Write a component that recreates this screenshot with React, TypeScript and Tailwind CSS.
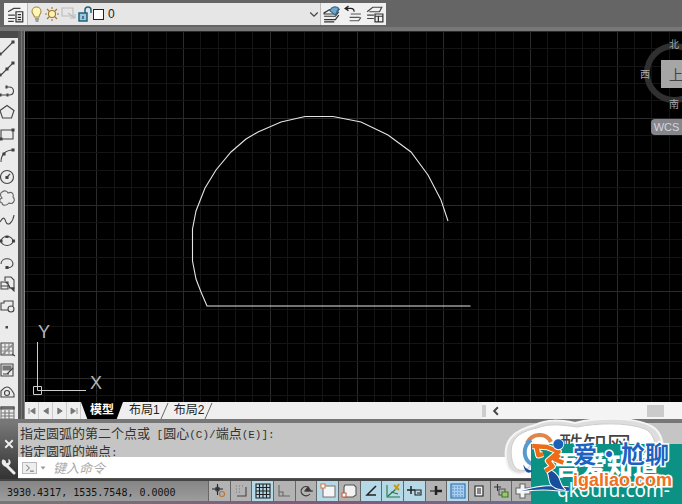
import type { ReactNode } from 'react';

function Icon({ children, className = 'h-4 w-4' }: { children: ReactNode; className?: string }) {
  return (
    <svg viewBox="0 0 16 16" className={`${className} shrink-0`} fill="none" stroke="#444" strokeWidth="1.1" aria-hidden="true">
      {children}
    </svg>
  );
}

const drawTools = [
  { label: '直线', icon: <><path d="M1 14L13 2" /><path d="M12 1h2v2h-2zM0 13h1v2H0z" fill="#333" /></> },
  { label: '构造线', icon: <><path d="M1 14L13 2" /><path d="M12 1h2v2h-2zM6 7h2v2H6zM0 13h1v2H0z" fill="#333" /></> },
  { label: '多段线', icon: <><path d="M0 12h9c6 0 6-8 0-8H6" /><path d="M6 3h1v2H6zM7 11h1v2H7zM0 11h1v2H0z" fill="#333" /></> },
  { label: '多边形', icon: <path d="M7 1.500l7 5-2.500 7.500h-9L0 6.500z" /> },
  { label: '矩形', icon: <><path d="M1 4h12v9H1z" /><path d="M12 3h2v2h-2zM0 12h2v2H0z" fill="#333" /></> },
  { label: '圆弧', icon: <><path d="M1 15C1 8 5 3 13 3" /><path d="M12 2h2v2h-2zM3 6h2v2H3z" fill="#333" /></> },
  { label: '圆', icon: <><circle cx="7" cy="8" r="6.500" /><path d="M6 9l4-4" /><path d="M6 7.500h2v2H6z" fill="#333" /></> },
  { label: '修订云线', icon: <path d="M2 2c3-2 5-1 6 1 4-2 6 1 5 4 3 3 0 8-4 6-2 3-7 3-7 0-3-1-3-4 0-5-2-2-2-5 0-6z" stroke="#666" /> },
  { label: '样条曲线', icon: <path d="M0 10c4-7 5-3 6 0 2 5 7 0 8-7" /> },
  { label: '椭圆', icon: <><ellipse cx="7" cy="8" rx="6" ry="4.500" /><path d="M0 7h2v2H0zM12.500 7h2v2h-2zM6 3h2v1.500H6z" fill="#333" /></> },
  { label: '椭圆弧', icon: <><path d="M1 9c0-7 12-7 12 0 0 3-4 4-6 4" /><path d="M6 11.500h2v2H6z" fill="#333" /></> },
  { label: '插入块', icon: <><path d="M5 5V1h6l3 3v8H9M1 6h7v7H1zM1 10h7M4 6c2 0 5 2 6 6" /><path d="M11 12h3v3z" fill="#222" /></> },
  { label: '创建块', icon: <><path d="M8 12H1V5h3V3h9v5" /><circle cx="11" cy="11" r="3" /></> },
  { label: '点', icon: <path d="M5.500 7h2.500v2.500H5.500z" fill="#444" stroke="none" /> },
  { label: '图案填充', icon: <><path d="M1 2h12v12H1z" /><path d="M1 6h12M1 10h12M5 2v12M9 2v12M2 14L13 3" stroke="#888" /><path d="M12 13l3 2" /></> },
  { label: '渐变色', icon: <><path d="M1 2h12v12H1z" /><path d="M3 4h8v4H3z" fill="#777" stroke="#777" /><path d="M3 12h6M7 12l6-6" /></> },
  { label: '面域', icon: <><path d="M1 13h13v-3c-2-3-3-7-7-7-3 0-4 2-6 4z" /><circle cx="7" cy="9" r="2.500" /></> },
  { label: '表格', icon: <><path d="M1 2h13v12H1zM1 8h13M1 11h13M5 5v9M9 5v9" stroke="#777" /><path d="M1 2h13v2H1z" fill="#999" /></> },
];

const statusTools = [
  { label: '推断约束', on: false, icon: <><path d="M1 6h11M6.500 1v11" stroke="#222" /><circle cx="6.500" cy="6" r="2" fill="#333" /><circle cx="11" cy="11" r="2.500" stroke="#b87333" /></> },
  { label: '捕捉模式', on: false, icon: <><path d="M13 4v9H4" /><path d="M3 3h8M3 6h6M3 9h6" stroke="#777" strokeDasharray="1 2" /></> },
  { label: '栅格显示', on: true, icon: <path d="M1 1h14v14H1zM4.500 1v14M8 1v14M11.500 1v14M1 4.500h14M1 8h14M1 11.500h14" stroke="#222" /> },
  { label: '正交模式', on: false, icon: <path d="M3 2v11h11M3 9h4v4" stroke="#666" /> },
  { label: '极轴追踪', on: false, icon: <><path d="M12 11A5 4.500 0 1 1 10 4M7 8h8M7 8l4-4" stroke="#333" /><path d="M7 8h6l-3-4z" fill="#333" /></> },
  { label: '对象捕捉', on: true, icon: <><path d="M3 3h12v11H3z" fill="#f6f6f6" stroke="#777" /><path d="M1 1h4v4H1z" fill="#fff" stroke="#d77a42" /></> },
  { label: '三维对象捕捉', on: false, icon: <><path d="M4 2h9l2 2v8l-3 2H3V4z" fill="#f2f2f2" stroke="#555" /><path d="M1 10h4v4H1z" fill="#fff" stroke="#c65d3a" /></> },
  { label: '对象捕捉追踪', on: true, icon: <path d="M13 3L4 12h9" stroke="#222" strokeWidth="1.5" /> },
  { label: '动态 UCS', on: true, icon: <><path d="M2 2v12h13M3 13l8-7M6 9l7 2" stroke="#27753f" /><path d="M9 2l5 5M14 1l-4 6" stroke="#c29b22" strokeWidth="2" /></> },
  { label: '动态输入', on: true, icon: <><path d="M1 7h8M5 3v8" stroke="#222" strokeWidth="1.5" /><path d="M9 7h6v5H9zM11 10h3" stroke="#222" /></> },
  { label: '线宽', on: false, icon: <><path d="M2 8h6" stroke="#222" /><path d="M8 3v9M8 8h6" stroke="#222" strokeWidth="2.500" /></> },
  { label: '透明度', on: true, icon: <><path d="M1 1h14v14H1z" fill="#a8ceef" stroke="#2b65a8" /><path d="M2 4h12M2 7h12M2 10h12M2 13h12" stroke="#4d88c7" strokeDasharray="2 1" /></> },
  { label: '快捷特性', on: false, icon: <><path d="M4 3h8v10H4z" fill="#eee" stroke="#222" /><path d="M6 6h4M6 8h4M6 10h4" stroke="#222" /></> },
  { label: '选择循环', on: false, icon: <><path d="M1 4h7M4.500 1v7" stroke="#333" /><path d="M6 6h6v6H6z" stroke="#555" /><path d="M9 9h6v5H9z" fill="#9dc66b" stroke="#3c7a28" /></> },
  { label: '注释监视器', on: false, icon: <path d="M5 1h5v4h5v6h-5v4H5v-4H1V5h4z" fill="#f4f4f4" stroke="#666" /> },
];

function LayerBar() {
  return (
    <header className="flex h-[31px] shrink-0 items-start border-b-4 border-[#777] bg-[#656565] pt-[3px] pl-1">
      <div className="flex h-[22px] w-[382px] items-center bg-[#e6e6e6] text-[#222]">
        <button aria-label="图层特性管理器" className="flex h-full w-6 items-center justify-center border-r border-[#bbb] bg-[#f3f3f3]">
          <Icon className="h-[18px] w-[18px]">
            <path d="M1 6l5-3h6M1 9h6M1 12h6M1 14.500h5" />
            <path d="M8 6h6v9H8zM9.500 8.500h3M9.500 11h3M9.500 13h3" stroke="#333" />
          </Icon>
        </button>
        <div className="flex h-full flex-1 items-center pl-px">
          <Icon>
            <path d="M5.500 11c0-2-2.500-3-2.500-5.500a4.500 4.500 0 0 1 9 0C12 8 10 9 10 11z" fill="#fff6b8" stroke="#a58b3f" />
            <path d="M6 13h4M6.500 15h3" stroke="#555" />
          </Icon>
          <Icon>
            <circle cx="7" cy="8" r="3.500" fill="#fff3b0" stroke="#9a7534" />
            <path d="M7 1v2M7 13v2M0 8h2M12 8h2M2 3l2 2M12 3l-2 2M2 13l2-2M12 13l-2-2" stroke="#9a7534" />
          </Icon>
          <Icon>
            <path d="M1 2h11v8H1z" stroke="#bbb" />
            <path d="M7 7l7 5M9 12h5V8" stroke="#bbb" />
          </Icon>
          <Icon>
            <path d="M2 7h8v8H2z" fill="#9ac6dc" stroke="#1f627f" strokeWidth="1.500" />
            <path d="M8 7V4c0-4 6-4 6 0v3" stroke="#1f627f" strokeWidth="1.500" />
            <path d="M6 10v3" stroke="#134" />
          </Icon>
          <span className="h-[11px] w-[11px] border border-[#222] bg-white" />
          <select aria-label="图层" className="h-full flex-1 appearance-none bg-transparent pl-1 font-['Liberation_Sans',sans-serif] text-xs outline-none">
            <option>0</option>
          </select>
          <Icon className="h-3 w-3">
            <path d="M3 6l5 5 5-5" strokeWidth="1.600" />
          </Icon>
        </div>
        <div className="flex h-full w-[66px] items-center justify-around border-l border-[#bbb] bg-[#f0f0f0]">
          <button aria-label="将对象的图层置为当前">
            <Icon className="h-[18px] w-[18px]">
              <path d="M1 7l5-3h8l-3 4H1zM1 10h10l3-4M1 13h10l3-4M1 15h9" stroke="#333" />
              <path d="M6 5c2-4 6-4 8-2l-3 6z" fill="#75a5c7" stroke="#356a91" />
            </Icon>
          </button>
          <button aria-label="上一个图层">
            <Icon className="h-[18px] w-[18px]">
              <path d="M1 3h5c2 0 3 1 3 3M4 1L1 3l3 2" stroke="#222" />
              <path d="M6 8h9M5 11h9M5 14h8l2-3" stroke="#555" />
            </Icon>
          </button>
          <button aria-label="图层状态管理器">
            <Icon className="h-[18px] w-[18px]">
              <path d="M1 6l5-4h8l-2 4M1 9h6M1 12h6M3 6h9" />
              <path d="M8 8h7v7H8zM8 10h7M11 10v5" stroke="#333" />
            </Icon>
          </button>
        </div>
      </div>
    </header>
  );
}

function DrawToolbar() {
  return (
    <div role="toolbar" aria-label="绘图" className="flex w-[25px] shrink-0 border-r border-[#888] bg-[#555]">
      <div className="flex w-[18px] flex-col bg-[#ebebeb]">
        <div className="h-[7px] shrink-0 bg-[#4b4b4b]" />
        <div className="flex min-h-0 flex-1 flex-col justify-between overflow-hidden pt-0.5">
          {drawTools.map((tool, i) => (
            <button key={tool.label} aria-label={tool.label} className={i === drawTools.length - 1 ? 'h-[14px]' : 'h-4'}>
              <Icon>{tool.icon}</Icon>
            </button>
          ))}
        </div>
      </div>
      <div className="ml-[3px] w-px bg-[#777]" />
    </div>
  );
}

// grid starts left of the viewport, every fifth line is a major one
const columns = Array.from({ length: 40 }, (_, i) => ({ at: Math.round(9.5 + i * 17.35), major: i % 5 === 0 }));
const rows = Array.from({ length: 22 }, (_, i) => ({ at: Math.round(31 + i * 17.35), major: i % 5 === 0 }));

function Drawing() {
  return (
    <main className="relative min-h-0 flex-1 overflow-hidden bg-black">
      <svg viewBox="25 31 657 371" preserveAspectRatio="xMinYMin slice" className="h-full w-full" fill="none">
        <g strokeWidth="1">
          {columns.map((c) => (
            <path key={c.at} d={`M${c.at + 0.5} 31V402`} stroke={c.major ? '#2b2b2b' : '#141414'} />
          ))}
          {rows.map((r) => (
            <path key={r.at} d={`M25 ${r.at + 0.5}H682`} stroke={r.major ? '#2b2b2b' : '#141414'} />
          ))}
        </g>
        <path
          d="M470.500 306H207L201 292L196 279L192.500 261V229L196 211L205 188L216 170L231 152L246 139L258 132L281 122L305 116.500H333L361 122L388 135L411 152L428 175L441 200L444 209L448 221"
          stroke="#e4e4e4"
          strokeWidth="1.100"
        />
        <path d="M37.500 342V386M41 390.500H86M33.500 386.500h8v8h-8zM37.500 387v3.500h4" stroke="#ccc" />
        <g fill="#b5b5b5" fontFamily="Liberation Sans, sans-serif" fontSize="18">
          <text x="38" y="338">Y</text>
          <text x="90" y="389">X</text>
        </g>
      </svg>

      {/* View cube */}
      <div className="absolute top-2 -right-5 h-[68px] w-[58px] font-['Noto_Sans_CJK_SC',sans-serif] text-[10px] leading-none text-[#aaa]">
        <svg viewBox="0 0 58 68" className="h-full w-full" fill="none">
          <circle cx="30" cy="34" r="27" stroke="#303030" strokeWidth="6" />
        </svg>
        <span className="absolute top-0 left-[25px]">北</span>
        <span className="absolute top-[30px] -left-1">西</span>
        <span className="absolute top-[60px] left-[25px]">南</span>
        <button className="absolute top-[21px] left-[17px] h-7 w-[30px] bg-[#a6a6a6] text-sm text-[#444]">上</button>
      </div>
      <button className="absolute top-[88px] -right-1 h-4 w-[35px] rounded-sm bg-[#85858c] pr-1 font-['Liberation_Sans',sans-serif] text-[11px] leading-4 text-[#d5d5dd]">
        WCS
      </button>
    </main>
  );
}

function Slash() {
  return (
    <svg viewBox="0 0 10 17" className="h-[17px] w-[10px] shrink-0" aria-hidden="true">
      <path d="M1 17L8 1" stroke="#666" fill="none" />
    </svg>
  );
}

function LayoutTabs() {
  return (
    <div className="flex h-[17px] shrink-0 items-stretch overflow-hidden bg-[#efefef] font-['Liberation_Sans','Noto_Sans_CJK_SC',sans-serif] text-xs leading-[17px] text-[#222]">
      {['M4 4v8M12 4L6 8l6 4z', 'M11 4L5 8l6 4z', 'M5 4l6 4-6 4z', 'M4 4l6 4-6 4zM12 4v8'].map((d, i) => (
        <button key={d} aria-label={['第一个', '上一个', '下一个', '最后一个'][i]} className="flex w-[14px] items-center justify-center border-r border-[#ccc]">
          <Icon className="h-3 w-3"><path d={d} fill="#777" stroke="#777" /></Icon>
        </button>
      ))}
      <button className="w-[42px] bg-black font-bold text-white [clip-path:polygon(0_0,100%_0,85%_100%,15%_100%)]">模型</button>
      <button className="ml-1.5">布局1</button>
      <Slash />
      <button className="ml-1">布局2</button>
      <Slash />
      <div className="flex-1" />
      <div className="flex w-[200px] items-center bg-[#f4f4f4]">
        <span className="h-3 w-1 bg-[#ccc]" />
        <button aria-label="向左滚动" className="ml-1 flex h-full w-3 items-center justify-center">
          <Icon className="h-[10px] w-[10px]"><path d="M11 2L5 8l6 6" strokeWidth="3" /></Icon>
        </button>
        <div className="flex-1" />
        <span className="mr-[18px] h-3 w-[17px] bg-[#cbcbcb]" />
      </div>
    </div>
  );
}

function CommandLine() {
  const mono = "font-['Liberation_Mono',monospace] text-[11px]";
  return (
    <section className="flex h-[60px] shrink-0 border-t-4 border-[#777] bg-[#c5c5c5]">
      <div className="flex w-[18px] shrink-0 flex-col items-center justify-between bg-linear-to-b from-[#777] to-[#333] pt-[15px] pb-1">
        <button aria-label="关闭">
          <Icon className="h-3 w-3"><path d="M3 3l10 10M13 3L3 13" stroke="#eee" strokeWidth="2.400" /></Icon>
        </button>
        <button aria-label="自定义">
          <Icon><path d="M6 7l7 7" stroke="#eee" strokeWidth="3" strokeLinecap="round" /><path d="M2 1C0 4 3 8 6 7s4-4 2-6v3L5 5 4 2z" fill="#eee" stroke="#eee" /></Icon>
        </button>
      </div>
      <div className="flex min-w-0 flex-1 flex-col font-['Noto_Sans_CJK_SC',sans-serif] text-[13px] text-[#333]">
        <div className="h-[34px] pt-[2px] pl-0.5 leading-[15px] whitespace-nowrap">
          <p>指定圆弧的第二个点或<span className={mono}> [</span>圆心<span className={mono}>(C)/</span>端点<span className={mono}>(E)]:</span></p>
          <p>指定圆弧的端点<span className={mono}>:</span></p>
        </div>
        <label className="flex flex-1 items-center border-b border-[#555] bg-white pl-1">
          <span className="flex h-3 w-[15px] items-center justify-center border border-[#bbb] bg-[#eee]">
            <Icon className="h-[10px] w-[10px]"><path d="M2 3l5 5-5 5M8 13h6" stroke="#666" strokeWidth="1.600" /></Icon>
          </span>
          <Icon className="ml-0.5 h-2 w-2"><path d="M3 5h10l-5 6z" fill="#999" stroke="none" /></Icon>
          <input aria-label="命令" placeholder="键入命令" className="ml-1.5 min-w-0 flex-1 bg-transparent text-[13px] italic outline-none placeholder:text-[#aaa]" />
        </label>
      </div>
    </section>
  );
}

function StatusBar() {
  return (
    <footer className="flex h-[25px] shrink-0 flex-col border-t-2 border-[#444] bg-linear-to-b from-[#858585] to-[#a0a0a0]">
      <div className="flex h-5 items-stretch">
        <output className="w-[208px] shrink-0 pl-[7px] font-['DejaVu_Sans_Mono',monospace] text-[10px] leading-6 whitespace-pre text-[#111]">3930.4317, 1535.7548, 0.0000</output>
        <div className="grid w-[325px] shrink-0 grid-cols-15">
          {statusTools.map((tool) => (
            <button
              key={tool.label}
              aria-label={tool.label}
              aria-pressed={tool.on}
              className={`flex items-center justify-center border-l border-[#666] ${tool.on ? 'bg-[#b5d9e6]' : 'bg-[#b3b3b3]'}`}
            >
              <Icon>{tool.icon}</Icon>
            </button>
          ))}
        </div>
      </div>
      <div className="flex-1 bg-linear-to-r from-[#777] via-[#80597a] to-[#557fa0]" />
    </footer>
  );
}

function Watermark() {
  const outline = '[paint-order:stroke] [-webkit-text-stroke:3px_white]';
  return (
    <div className="pointer-events-none absolute right-0 bottom-0 h-[92px] w-[178px] overflow-hidden">
      <svg viewBox="504 412 178 92" className="h-full w-full" fill="none" aria-hidden="true">
        <path d="M507 464c-6-24 8-34 28-39 12-6 25-5 40-2 20-5 58-7 76 3 12 6 15 24 10 40H531c-3 12-22 10-24-2z" fill="#ddd" stroke="#f5f5f5" strokeWidth="2" />
        <path d="M512 460c-4-20 6-28 25-32 12-5 26-3 40-1 20-4 50-5 68 2 12 6 12 22 8 35H531c-5 10-17 8-19-4z" fill="#fff" stroke="#ccc" />
        <path d="M527 443c5-10 19-11 24-1" stroke="#e18549" strokeWidth="4" />
        <path d="M531 440c-9 7-8 20 1 24" stroke="#579bce" strokeWidth="4" />
      </svg>
      <span className="absolute top-[18px] left-[55px] font-['Noto_Sans_CJK_SC',sans-serif] text-2xl leading-7 text-[#444]">酷知网</span>
      <div className="absolute top-8 right-0 h-[60px] w-[151px] bg-[#0b9284] text-white">
        <span className="absolute top-1 left-6 font-['Noto_Sans_CJK_SC',sans-serif] text-[26px] leading-8 font-black whitespace-nowrap">吾爱知道</span>
        <span className="absolute top-[34px] left-[26px] font-['Noto_Sans',sans-serif] text-[19px] leading-6 whitespace-nowrap">qkoufu.com-</span>
      </div>
      <svg viewBox="417 130 150 165" className="absolute top-[26px] left-[15px] h-[55px] w-[50px]" fill="none" strokeLinejoin="round" aria-hidden="true">
        <path d="M420 290c40-12 80-17 100-15 50 2 70 6 97 8-30 6-60 6-90 4-40-5-70-1-107 3z" fill="#174f9c" stroke="white" strokeWidth="5" paintOrder="stroke" />
        <path d="M498 222c22 6 36 18 40 34 4 12 8 22 17 29-22-1-38-8-44-20-5-13-3-28-13-43z" fill="#174f9c" stroke="white" strokeWidth="6" paintOrder="stroke" />
        <path d="M430 209c6 13 14 17 27 19-4 6-10 7-16 5-7-5-10-14-11-24z" fill="#174f9c" />
        <path d="M457 154l44 3 35 14-32 28 14 16-22 14M470 158l5 24 14-4M538 180l-14 14 26 10" stroke="white" strokeWidth="19" />
        <path d="M457 154l44 3 35 14-32 28 14 16-22 14M470 158l5 24 14-4M538 180l-14 14 26 10" stroke="#ef6b16" strokeWidth="13" />
        <circle cx="535" cy="149" r="15" fill="#1960b6" stroke="white" strokeWidth="5" paintOrder="stroke" />
      </svg>
      <div className={`absolute top-[25px] left-[69px] flex font-['Noto_Sans_CJK_SC',sans-serif] text-2xl leading-8 font-bold text-[#1b62c2] ${outline}`}>
        <span>爱</span>
        <span className="w-6 text-center">·</span>
        <span>尬聊</span>
      </div>
      <span className={`absolute top-[56px] left-[69px] font-['Liberation_Sans',sans-serif] text-lg leading-6 font-bold text-[#f07020] ${outline}`}>igaliao.com</span>
    </div>
  );
}

export default function App() {
  return (
    <div className="relative flex h-screen flex-col overflow-hidden bg-[#666]">
      <LayerBar />
      <div className="flex min-h-0 flex-1">
        <DrawToolbar />
        <div className="flex min-w-0 flex-1 flex-col">
          <Drawing />
          <LayoutTabs />
        </div>
      </div>
      <CommandLine />
      <StatusBar />
      <Watermark />
    </div>
  );
}
